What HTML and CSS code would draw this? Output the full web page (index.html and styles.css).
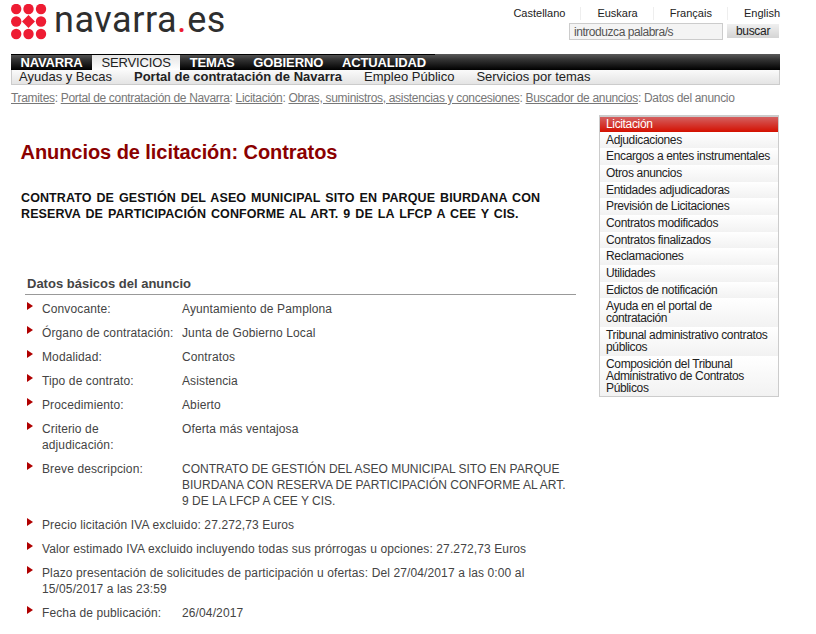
FILE: index.html
```html
<!DOCTYPE html>
<html lang="es">
<head>
<meta charset="utf-8">
<title>Anuncios de licitación</title>
<link rel="stylesheet" href="styles.css">
</head>
<body>
<div class="page">
  <header class="top">
    <div class="logo">
      <svg class="logo-mark" width="36" height="36" viewBox="0 0 36 36" aria-hidden="true">
        <g fill="#ee1c33">
          <circle cx="5.200" cy="5" r="5.200"/><circle cx="17.500" cy="5" r="5.200"/><circle cx="30" cy="5" r="5.200"/>
          <circle cx="5.200" cy="17.500" r="5.200"/><path d="M17.500 11l6.500 6.500-6.500 6.500-6.500-6.500z"/><circle cx="30" cy="17.500" r="5.200"/>
          <circle cx="5.200" cy="30" r="5.200"/><circle cx="17.500" cy="30" r="5.200"/><circle cx="30" cy="30" r="5.200"/>
        </g>
      </svg>
      <span class="logo-text">navarra<span class="logo-dot">.</span>es</span>
    </div>
    <div class="tools">
      <nav class="langs">
        <a>Castellano</a><a>Euskara</a><a>Français</a><a>English</a>
      </nav>
      <form class="search">
        <input class="search-input" type="text" value="introduzca palabra/s">
        <button class="search-btn" type="button">buscar</button>
      </form>
    </div>
  </header>

  <nav class="mainnav">
    <div class="mainnav-items">
      <a>NAVARRA</a><a class="on">SERVICIOS</a><a>TEMAS</a><a>GOBIERNO</a><a>ACTUALIDAD</a>
    </div>
  </nav>
  <nav class="subnav">
    <a>Ayudas y Becas</a><a class="on">Portal de contratación de Navarra</a><a>Empleo Público</a><a>Servicios por temas</a>
  </nav>
  <div class="crumbs"><a>Tramites</a>: <a>Portal de contratación de Navarra</a>: <a>Licitación</a>: <a>Obras, suministros, asistencias y concesiones</a>: <a>Buscador de anuncios</a>: Datos del anuncio</div>

  <div class="columns">
    <main class="content">
      <h1>Anuncios de licitación: Contratos</h1>
      <h2>CONTRATO DE GESTIÓN DEL ASEO MUNICIPAL SITO EN PARQUE BIURDANA CON RESERVA DE PARTICIPACIÓN CONFORME AL ART. 9 DE LA LFCP A CEE Y CIS.</h2>
      <section class="datos">
        <h3>Datos básicos del anuncio</h3>
        <ul>
          <li><span class="k">Convocante:</span><span class="v">Ayuntamiento de Pamplona</span></li>
          <li><span class="k">Órgano de contratación:</span><span class="v">Junta de Gobierno Local</span></li>
          <li><span class="k">Modalidad:</span><span class="v">Contratos</span></li>
          <li><span class="k">Tipo de contrato:</span><span class="v">Asistencia</span></li>
          <li><span class="k">Procedimiento:</span><span class="v">Abierto</span></li>
          <li><span class="k">Criterio de<br>adjudicación:</span><span class="v">Oferta más ventajosa</span></li>
          <li><span class="k">Breve descripcion:</span><span class="v caps">CONTRATO DE GESTIÓN DEL ASEO MUNICIPAL SITO EN PARQUE BIURDANA CON RESERVA DE PARTICIPACIÓN CONFORME AL ART. 9 DE LA LFCP A CEE Y CIS.</span></li>
          <li>Precio licitación IVA excluido: 27.272,73 Euros</li>
          <li>Valor estimado IVA excluido incluyendo todas sus prórrogas u opciones: 27.272,73 Euros</li>
          <li>Plazo presentación de solicitudes de participación u ofertas: Del 27/04/2017 a las 0:00 al 15/05/2017 a las 23:59</li>
          <li><span class="k">Fecha de publicación:</span><span class="v">26/04/2017</span></li>
        </ul>
      </section>
    </main>
    <aside class="side">
      <a class="on">Licitación</a>
      <a>Adjudicaciones</a>
      <a>Encargos a entes instrumentales</a>
      <a>Otros anuncios</a>
      <a>Entidades adjudicadoras</a>
      <a>Previsión de Licitaciones</a>
      <a>Contratos modificados</a>
      <a>Contratos finalizados</a>
      <a>Reclamaciones</a>
      <a>Utilidades</a>
      <a>Edictos de notificación</a>
      <a>Ayuda en el portal de contratación</a>
      <a>Tribunal administrativo contratos públicos</a>
      <a>Composición del Tribunal Administrativo de Contratos Públicos</a>
    </aside>
  </div>
</div>
</body>
</html>
```
FILE: styles.css
```css
* { box-sizing: border-box; }
html, body { margin: 0; padding: 0; background: #fff; }
body { font-family: "Liberation Sans", Arial, sans-serif; font-size: 12px; color: #333; height: 634px; overflow: hidden; }
.page { width: 769px; margin-left: 11px; }

.top { height: 54px; display: flex; justify-content: space-between; }
.logo { display: flex; align-items: flex-start; padding-top: 4px; }
.logo-mark { display: block; }
.logo-text { font-family: Roboto, sans-serif; font-weight: 400; font-size: 36px; letter-spacing: .55px; line-height: 40px; color: #2e2e2e; margin: -4px 0 0 7px; }
.logo-dot { color: #ee1c33; }

.tools { width: 267px; display: flex; flex-direction: column; align-items: flex-end; padding-top: 7px; }
.langs { display: flex; font-size: 11px; line-height: 13px; color: #222; }
.langs a + a { margin-left: 15px; padding-left: 16px; border-left: 1px solid #eee; }
.search { display: flex; margin-top: 3px; gap: 4px; margin-right: 1px; }
.search-input { width: 154px; height: 17px; border: 1px solid #ccc; padding: 0 4px; font: 12px "Liberation Sans", Arial, sans-serif; letter-spacing: -.45px; color: #555; background: #f4f4f4; }
.search-btn { width: 52px; height: 14px; margin-top: 1px; border: 0; padding: 0; background: linear-gradient(#f0f0f0, #d4d4d4); font: 12px/14px "Liberation Sans", Arial, sans-serif; letter-spacing: -.3px; color: #222; }

.mainnav { height: 16px; background: linear-gradient(#5a5a5a 0, #333 35%, #000 100%); font-size: 13px; line-height: 15px; font-weight: bold; letter-spacing: -.12px; color: #fff; }
.mainnav-items { display: inline-flex; height: 16px; border-top: 1px solid #000; }
.mainnav a { padding: 0 9.4px; }
.mainnav a.on { background: linear-gradient(#e4e4e4, #fff); color: #222; font-weight: normal; }
.subnav { height: 15px; display: flex; background: linear-gradient(#fafafa, #e4e4e4); border: 1px solid #ccc; border-top: 0; font-size: 13px; line-height: 13px; color: #222; padding-left: 7px; gap: 22px; }
.subnav a.on { font-weight: bold; }
.crumbs { margin-top: 6px; line-height: 14px; color: #777; letter-spacing: -.32px; white-space: nowrap; }
.crumbs a { text-decoration: underline; }

.columns { display: flex; justify-content: space-between; align-items: flex-start; margin-top: 10px; }
.content { width: 565px; padding-left: 10px; }
h1 { margin: 25px 0 0 -.5px; font-size: 20px; line-height: 24px; color: #8b0000; font-weight: bold; letter-spacing: -.06px; }
h2 { margin: 26px 0 0; font-size: 12.5px; line-height: 16px; color: #111; font-weight: bold; letter-spacing: .1px; word-spacing: 1.36px; width: 530px; }
.datos { margin: 54px 0 0 4px; }
h3 { margin: 0; padding: 0 0 2px 2px; font-size: 13px; line-height: 16px; font-weight: bold; color: #444; border-bottom: 1px solid #999; }
.datos ul { list-style: none; margin: 6px 0 0; padding: 0; letter-spacing: .12px; line-height: 16px; color: #444; }
.datos li { display: flex; flex-wrap: wrap; padding-left: 17px; margin-bottom: 8px; position: relative; }
.datos li::before { content: ""; position: absolute; left: 2px; top: 1px; border-left: 6px solid #b00000; border-top: 4.5px solid transparent; border-bottom: 4.5px solid transparent; }
.k { width: 140px; }
.v { flex: 1; }
.caps { letter-spacing: 0; padding-right: 8px; }

.side { width: 180px; margin-right: 1px; border: 1px solid #ccc; border-top: 2px solid #ccc; font-size: 12px; line-height: 12px; letter-spacing: -.35px; color: #222; }
.side a { display: block; padding: 2px 5px 2.67px 6px; background: linear-gradient(#fff, #f2f2f2); }
.side a.on { padding: 1px 5px 1.67px 6px; background: linear-gradient(#d46060, #d41000); color: #fff; }
```
